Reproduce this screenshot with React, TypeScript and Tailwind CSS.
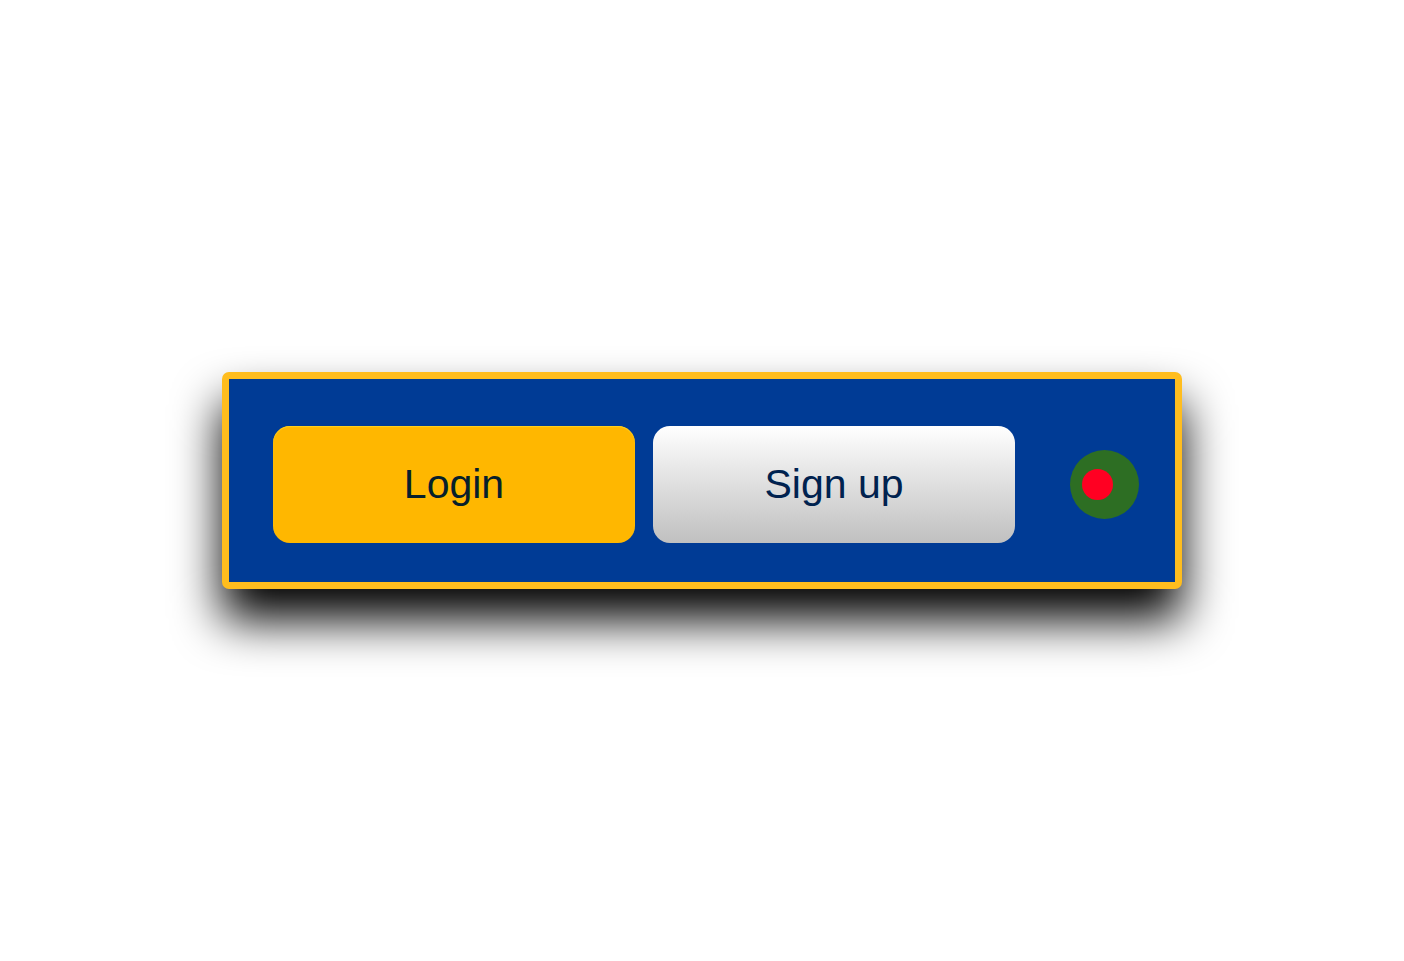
export default function App() {
  return (
    <main className="flex min-h-screen items-center justify-center bg-white p-4 font-['Liberation_Sans',Arial,sans-serif]">
      <section
        aria-label="Account"
        className="w-full max-w-[960px] rounded-[7px] bg-[#ffbd1e] p-[7px] shadow-[0_31px_48px_#000]"
      >
        <div className="flex items-center bg-[#003b95] pt-[47px] pr-9 pb-[39px] pl-11 shadow-[inset_0_0_1px_#2d4a50]">
          <div className="flex flex-1 gap-[18px]">
            <button
              type="button"
              className="h-[117px] flex-1 cursor-pointer rounded-[17px] bg-[#ffb700] text-[41px] leading-none text-[#06202b] shadow-[inset_0_1px_1px_#ffd21f]"
            >
              Login
            </button>
            <button
              type="button"
              className="h-[117px] flex-1 cursor-pointer rounded-[17px] bg-linear-to-b from-[#ffffff] to-[#c0c0c0] text-[41px] leading-none text-[#00224f]"
            >
              Sign up
            </button>
          </div>
          <div className="ml-[55px] flex size-[69px] shrink-0 items-center rounded-full bg-[#2d6e23] pl-3">
            <div className="size-[31px] rounded-full bg-[#ff0022]" />
          </div>
        </div>
      </section>
    </main>
  );
}
